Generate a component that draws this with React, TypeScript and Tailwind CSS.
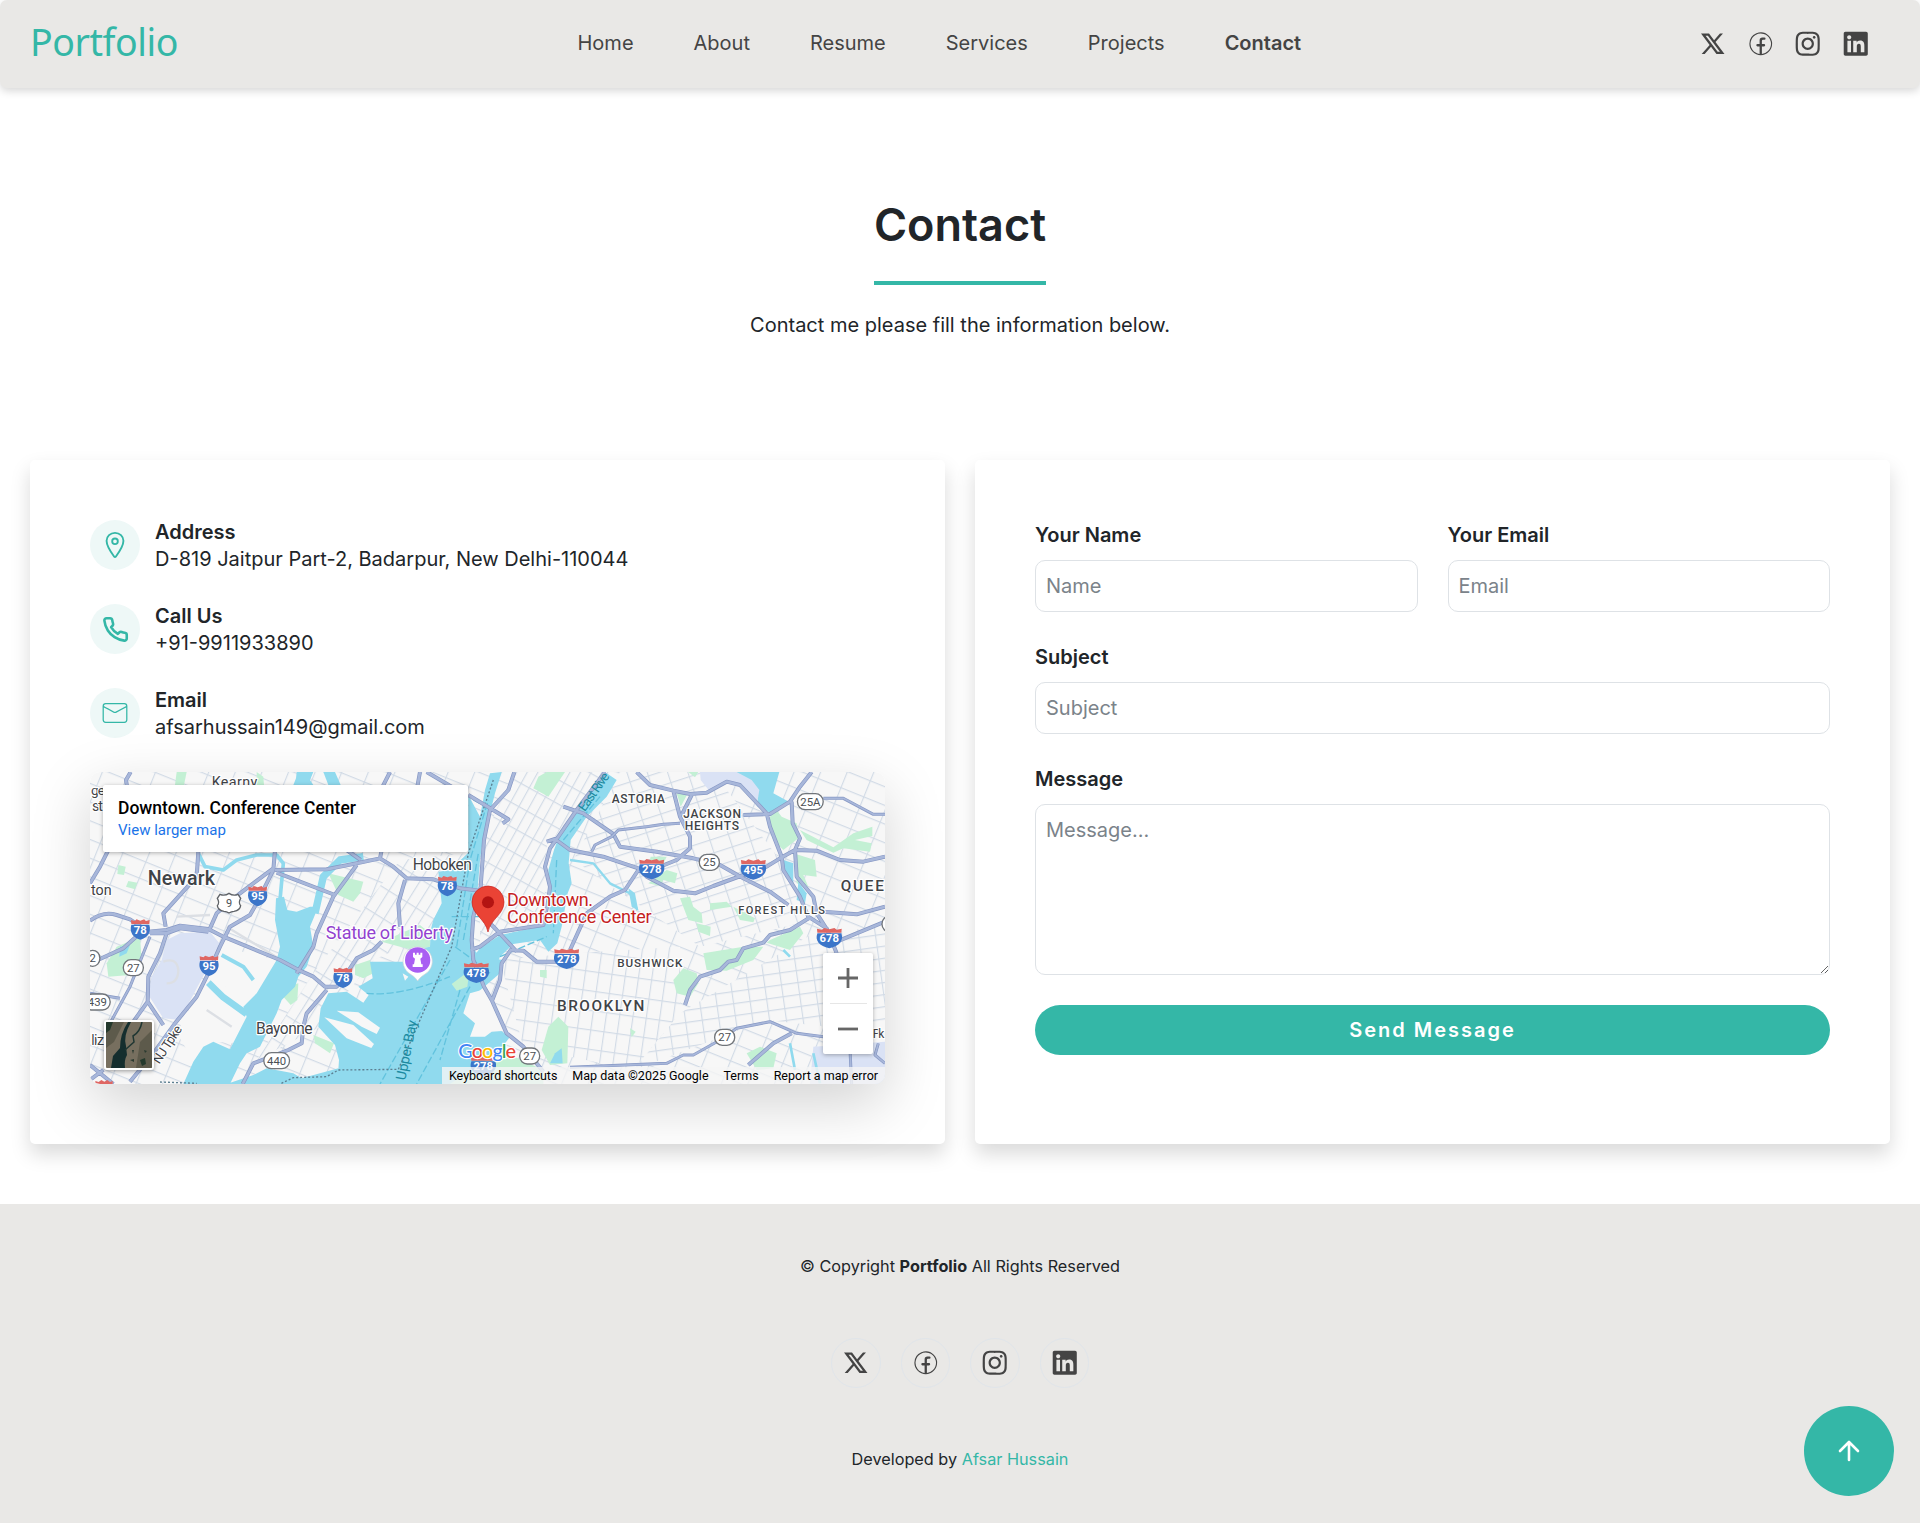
import type { ReactNode } from "react";
import { RiTwitterXLine } from "react-icons/ri";
import { CiFacebook, CiMail } from "react-icons/ci";
import { FaInstagram, FaLinkedin } from "react-icons/fa";
import { IoLocationOutline } from "react-icons/io5";
import { FiPhone } from "react-icons/fi";

const NAV = ["Home", "About", "Resume", "Services", "Projects", "Contact"];
const SOCIALS = [RiTwitterXLine, CiFacebook, FaInstagram, FaLinkedin];

/* ---------- map data ---------- */
const WEST_WATER = [
  "588,415 612,410 622,450 650,455 690,440 715,440 690,500 700,560 680,620 655,650 645,680 605,720 590,760 540,860 500,880 480,910 450,972 310,972 340,905 370,860 400,845 450,868 500,770 490,740 530,700 590,600 600,560 585,480",
  "440,972 520,945 560,925 640,940 665,955 775,925 800,972",
  "650,36 700,36 690,60 700,75 640,75 648,55",
  "730,36 765,36 782,75 745,75",
  "120,560 150,555 140,580 118,590",
  "1230,40 1215,90 1200,170 1165,105 1165,278 1110,330 1075,335 1085,430 1060,480 1052,510 1050,560 1000,570 970,605 870,605 878,655 835,680 866,705 850,728 800,695 745,700 722,745 715,800 765,855 777,900 775,930 790,972 1110,972 1260,870 1290,830 1245,800 1210,770 1190,700 1260,640 1270,600 1200,590 1175,560 1180,480 1192,400 1200,300 1210,230 1225,180 1245,100 1265,36",
];
const EAST_WATER = [
  "375,36 410,60 380,110 320,170 272,240 266,310 275,370 263,400 245,500 232,550 205,575 180,540 100,552 60,590 40,640 0,645 -20,590 0,565 60,525 180,500 212,480 205,420 205,330 222,270 235,235 290,160 330,100",
  "770,36 898,36 880,100 932,128 870,158 830,138 838,90 815,60",
  "910,300 940,310 940,370 915,350",
  "955,365 980,400 975,430 950,420",
  "225,880 245,865 248,910 210,910",
];
const LAND_ON_WATER = [
  "770,752 835,757 900,803 890,822 845,800",
  "733,772 820,795 882,852 874,864 800,835",
  "1150,760 1170,700 1205,690 1260,760 1275,812 1235,815 1215,830 1170,830 1185,790",
  "968,640 985,650 975,662",
  "430,650 470,660 500,700 490,715 440,690",
];
const WEST_PARKS = [
  "290,36 320,36 312,75 285,75",
  "530,36 550,50 552,75 530,75",
  "115,315 137,320 132,345 112,342",
  "145,363 172,368 165,388 138,380",
  "80,610 110,560 180,530 185,600 150,645 85,650",
  "745,340 850,365 840,400 820,425 775,405",
  "905,545 1020,495 1050,520 1050,560 1000,570 960,560",
  "825,615 870,600 880,640 850,655 825,645",
  "620,680 655,670 652,720 632,735 610,710",
  "700,825 762,850 750,880 705,850",
  "1120,670 1165,632 1160,680 1130,690",
];
const EAST_PARKS = [
  "175,50 200,36 255,36 205,110 160,85",
  "590,100 622,103 602,140",
  "512,290 560,290 545,320 510,300",
  "505,370 560,330 592,340 585,370 550,360 540,378",
  "600,415 630,410 640,440 665,460 668,490 625,480",
  "650,490 692,500 690,528 655,515",
  "760,440 825,475 820,487 780,480",
  "690,430 740,425 755,440 690,450",
  "870,170 890,150 905,170 950,190 955,235 910,270 880,240 865,200",
  "960,210 1060,262 1120,220 1177,200 1177,228 1125,240 1175,250 1170,275 1090,265 1060,278 980,240",
  "940,280 1005,300 1010,350 970,345 985,380 950,370",
  "870,540 960,500 970,520 930,570 860,548",
  "670,580 790,560 850,560 820,600 740,632 680,630",
  "580,660 610,625 650,640 655,670 630,710 590,700",
  "180,630 200,630 200,655 180,650",
  "205,800 235,770 265,800 262,910 210,915 185,870",
  "450,805 467,815 455,832",
  "800,880 840,860 890,880 880,925 830,930",
  "10,770 50,770 40,800 0,790",
  "-60,880 60,870 190,930 190,972 -90,972",
  "625,36 655,36 645,52",
];
const WEST_ROADS = [
  "M152,36 L138,60 L142,85",
  "M85,270 L60,320 L30,370",
  "M30,482 Q70,452 110,465 L150,478 L205,515 L260,510 L300,497 L385,507 L430,530 L600,600 L660,632 L700,650 L735,680 L770,680 L800,650",
  "M40,606 L130,565 L180,520",
  "M210,520 L260,520 L300,505 L385,515",
  "M260,520 L240,580 L205,650 L203,725 L160,785",
  "M203,725 L250,795",
  "M585,270 L580,330 L530,430 L510,465 L450,500 L420,560 L380,650 L350,710 L285,790 L220,880 L150,965",
  "M580,325 L480,400 L410,460 L390,505",
  "M585,330 L740,328 L830,310 L900,295 L940,320 L980,355 L1060,358 L1140,385 L1200,392",
  "M590,338 L765,405",
  "M830,315 L760,410 L710,520 L700,560 L650,640",
  "M975,360 L955,430 L960,500",
  "M905,545 L880,570 L830,595 L800,640",
  "M740,690 L680,760 L670,800 L665,850 L625,870 L520,910 L488,972",
  "M355,275 L350,350 L250,460 L257,500",
  "M930,36 L905,85 M1020,36 L1012,80 M1040,36 L1115,80 M905,270 L900,295 M800,270 L842,300",
  "M30,915 L100,972 M30,960 L70,930",
];
const EAST_ROADS = [
  "M103,36 L85,90 L30,150 L12,240 L2,380 L-20,470 L-25,540 L-20,600 L12,680 L35,720 L80,820 L130,860 L190,935",
  "M375,36 L290,150 L235,230 L210,265 L195,320 L210,380 L205,420 L190,495 L60,515 L0,560 L-28,570",
  "M-35,105 L85,178 L68,190",
  "M250,140 L310,160 L400,222 L420,260 L530,275 L640,295 L720,315 L790,355 L870,395 L925,435",
  "M200,245 L225,237 L270,270 L370,290 L430,310 L475,325 L500,350 L580,392 L645,400 L700,378 L790,345 L860,320 L900,295 L945,270 L1010,272 L1080,300 L1150,305 L1215,290",
  "M475,330 L435,390 L390,410 L320,460 L270,570",
  "M270,605 L170,605 L130,572 L92,570 L65,610 L60,660 L35,725",
  "M110,575 L50,510 L20,480",
  "M470,36 L510,75 L580,92 L630,102 L680,98 L740,65 L780,75 L860,160 L870,200 L905,290 L910,330 L960,410 L985,470 L1040,505 L1070,580",
  "M580,92 L600,170 L630,230 L630,265 L590,300 L540,320",
  "M635,105 L605,165",
  "M790,165 L870,162 L930,125 L960,80 L995,36",
  "M935,125 L938,190 L960,235 L945,270 L950,350 L1000,410 L1010,460 L1045,515",
  "M1030,455 L1130,463 L1215,440",
  "M1070,545 L1215,485",
  "M990,472 L930,510 L870,525 L850,548 L790,565 L770,600 L745,605 L720,630 L660,650 L630,690 L615,735",
  "M805,915 L880,850 L935,820",
];
const THIN_ROADS_EAST = [
  "M335,275 L345,255 L395,230 L415,210 L500,200 L550,193 L600,190",
  "M1030,115 L1090,115 L1180,163 L1215,163",
  "M270,922 L560,910 L610,885 L640,885 L720,840 L770,805 L870,785 L950,820 L1030,830",
  "M1110,870 L1115,972 M1195,850 L1185,885 L1215,910",
];

const Polys = ({ pts, fill }: { pts: string[]; fill: string }) => (
  <g fill={fill}>{pts.map((p) => <polygon key={p} points={p} />)}</g>
);

const Roads = ({ d, w }: { d: string[]; w: number }) => (
  <g fill="none" strokeLinejoin="round">
    <path d={d.join(" ")} stroke="#8798c4" strokeWidth={w} />
    <path d={d.join(" ")} stroke="#a8b7da" strokeWidth={w - 4} />
  </g>
);

const Interstate = ({ x, y, n }: { x: number; y: number; n: string }) => {
  const k = n.length > 2 ? 1.38 : 1.04;
  return (
    <g transform={`translate(${x} ${y})`}>
      <g transform={`scale(${k} 1)`}>
        <path d="M-26,-14 C-32,8 -22,24 0,31 C22,24 32,8 26,-14 Z" fill="#3b75c9" />
        <path d="M-26,-16 L-27,-28 L-16,-25 L-11,-30 L0,-26 L11,-30 L16,-25 L27,-28 L26,-16 Z" fill="#df6763" />
      </g>
      <text y="13" textAnchor="middle" fill="#fff" fontSize="34" fontWeight="700">{n}</text>
    </g>
  );
};

const Oval = ({ x, y, n }: { x: number; y: number; n: string }) => {
  const w = 26 + n.length * 17;
  return (
    <g transform={`translate(${x} ${y})`}>
      <rect x={-w / 2} y="-24" width={w} height="48" rx="23" fill="#fff" stroke="#71757a" strokeWidth="4" />
      <text y="12" textAnchor="middle" fill="#4b4f54" fontSize="34">{n}</text>
    </g>
  );
};

type LabelProps = { x: number; y: number; w: number; size: number; weight?: number; fill?: string; rotate?: number; halo?: boolean; children: ReactNode };
const Label = ({ x, y, w, size, weight = 400, fill = "#3f4347", rotate = 0, halo = true, children }: LabelProps) => (
  <text
    transform={`translate(${x} ${y}) rotate(${rotate})`}
    textLength={w}
    fontSize={size}
    fontWeight={weight}
    fill={fill}
    stroke={halo ? "#fff" : "none"}
    strokeWidth={halo ? 7 : 0}
    strokeLinejoin="round"
    paintOrder="stroke"
  >
    {children}
  </text>
);

const Grid = ({ id, w, h, r }: { id: string; w: number; h: number; r: number }) => (
  <pattern id={id} width={w} height={h} patternUnits="userSpaceOnUse" patternTransform={`rotate(${r})`}>
    <path d={`M0,0 H${w} M0,0 V${h}`} fill="none" stroke="#d2dbe6" strokeWidth="7" />
  </pattern>
);

function MapDrawing() {
  return (
    <svg viewBox="30 36 2385 936" preserveAspectRatio="none" className="block h-full w-full font-['Roboto']">
      <defs>
        <Grid id="gridBase" w={74} h={52} r={22} />
        <Grid id="gridManhattan" w={28} h={64} r={29} />
        <Grid id="gridJersey" w={32} h={80} r={32} />
        <Grid id="gridQueens" w={58} h={40} r={-18} />
        <Grid id="gridBrooklyn" w={40} h={58} r={8} />
        <Grid id="gridSouth" w={50} h={36} r={-8} />
      </defs>
      <rect x="30" y="36" width="2385" height="936" fill="#f7f7f7" />
      <rect x="30" y="36" width="2385" height="936" fill="url(#gridBase)" />
      <polygon points="530,900 700,640 960,300 1160,280 1100,500 880,600 720,800" fill="#f7f7f7" />
      <polygon points="530,900 700,640 960,300 1160,280 1100,500 880,600 720,800" fill="url(#gridJersey)" />
      <g transform="translate(1200)">
        <polygon points="100,36 375,36 200,260 190,500 0,560 0,260" fill="#f7f7f7" />
        <polygon points="100,36 375,36 200,260 190,500 0,560 0,260" fill="url(#gridManhattan)" />
        <polygon points="420,36 700,36 900,300 1000,480 660,560 280,300" fill="#f7f7f7" />
        <polygon points="420,36 700,36 900,300 1000,480 660,560 280,300" fill="url(#gridQueens)" />
        <polygon points="60,600 280,580 600,560 600,760 460,930 130,860" fill="#f7f7f7" />
        <polygon points="60,600 280,580 600,560 600,760 460,930 130,860" fill="url(#gridBrooklyn)" />
        <polygon points="600,760 1000,520 1215,500 1215,820 860,780 460,930" fill="#f7f7f7" />
        <polygon points="600,760 1000,520 1215,500 1215,820 860,780 460,930" fill="url(#gridSouth)" />
      </g>

      <polygon points="425,560 590,600 560,700 500,765 480,850 400,845 340,900 290,820" fill="#f7f7f7" />
      <polygon points="260,540 300,520 390,515 418,550 390,610 300,780 250,775 205,705 215,650 245,600" fill="#dae2f5" />
      <path d="M250,605 q40,-15 45,25 q0,40 -35,40 M290,470 L390,465 M380,750 L455,800 M440,500 L620,610" fill="none" stroke="#dcdfe4" strokeWidth="7" />
      <Polys pts={WEST_PARKS} fill="#c3f0d4" />
      <g transform="translate(1200)">
        <polygon points="660,36 815,36 842,90 830,125 770,70 740,60 690,95 662,60" fill="#dae2f5" />
        <polygon points="1000,860 1215,845 1215,972 990,972" fill="#dae2f5" />
        <Polys pts={EAST_PARKS} fill="#c3f0d4" />
      </g>

      <g fill="none" stroke="#90daee" strokeLinejoin="round">
        <path d="M355,280 L375,320 L430,330 L470,300 L530,285 L590,285 L610,310 L600,420" strokeWidth="11" />
        <path d="M705,460 L730,350 L780,300 L850,290" strokeWidth="22" />
        <path d="M385,668 L430,712 L500,762" strokeWidth="20" />
        <path d="M425,585 L490,620 L520,660" strokeWidth="12" />
        <path d="M1470,300 L1540,310 L1590,370 L1650,400 L1672,450" strokeWidth="7" />
        <path d="M2110,570 L2130,590 M2130,850 L2145,930 M2200,880 L2220,970" strokeWidth="8" />
      </g>
      <path d="M1645,385 L1665,400 L1675,452 L1655,440 Z" fill="#90daee" />
      <Polys pts={WEST_WATER} fill="#90daee" />
      <g transform="translate(1200)"><Polys pts={EAST_WATER} fill="#90daee" /></g>
      <Polys pts={LAND_ON_WATER} fill="#f7f7f7" />
      <polygon points="1115,672 1168,632 1162,680 1130,692" fill="#c3f0d4" />
      <g fill="none" stroke="#62c3de" strokeWidth="4" strokeDasharray="22 8">
        <path d="M860,700 Q960,710 1110,650 M1110,600 L900,972 M1170,680 L1010,972 M1125,560 L1180,600 L1230,640 M1130,560 L1170,300 L1225,120 M1150,540 L1195,280 M1140,690 L1080,900 M1115,470 L1200,470 M1180,120 L1240,150" />
        <path d="M1430,300 L1420,520 M1260,590 L1400,530 M1450,240 L1560,110" />
      </g>
      <path d="M1240,60 L1165,280 L1140,420 L1115,560 L1020,780 L955,928 L775,930 L740,950 L640,953 L600,972 M240,966 L350,970" fill="none" stroke="#5c7f91" strokeWidth="4" strokeDasharray="6 6" />

      <Roads d={WEST_ROADS} w={12} />
      <Roads d={["M210,530 L150,680 L90,790", "M30,700 L120,715"]} w={9} />
      <g transform="translate(1200)">
        <Roads d={EAST_ROADS} w={12} />
        <Roads d={THIN_ROADS_EAST} w={9} />
      </g>

      <Label x={395} y={82} w={137} size={43}>Kearny</Label>
      <Label x={33} y={105} w={42} size={41}>ge</Label>
      <Label x={36} y={154} w={33} size={43}>st</Label>
      <Label x={33} y={404} w={62} size={43}>ton</Label>
      <Label x={203} y={374} w={202} size={59} weight={500}>Newark</Label>
      <Label x={998} y={330} w={178} size={47}>Hoboken</Label>
      <Label x={737} y={536} w={382} size={54} fill="#9242cf">Statue of Liberty</Label>
      <Label x={528} y={823} w={170} size={47}>Bayonne</Label>
      <Label x={34} y={856} w={38} size={43}>liz</Label>
      <Label x={238} y={914} w={128} size={39} rotate={-57}>NJ Tpke</Label>
      <Label x={976} y={962} w={182} size={42} fill="#1c8aa0" rotate={-79} halo={false}>Upper Bay</Label>
      <Label x={1514} y={157} w={132} size={39} fill="#1c8aa0" rotate={-55} halo={false}>East Rive</Label>
      <Label x={1595} y={130} w={160} size={36} weight={500}>ASTORIA</Label>
      <Label x={1810} y={175} w={173} size={36} weight={500}>JACKSON</Label>
      <Label x={1814} y={210} w={163} size={36} weight={500}>HEIGHTS</Label>
      <Label x={2282} y={394} w={130} size={46} weight={500}>QUEE</Label>
      <Label x={1975} y={461} w={260} size={33} weight={500}>FOREST HILLS</Label>
      <Label x={1612} y={621} w={195} size={35} weight={500}>BUSHWICK</Label>
      <Label x={1431} y={752} w={262} size={46} weight={500}>BROOKLYN</Label>
      <Label x={2378} y={834} w={35} size={36}>Pk</Label>

      <Interstate x={533} y={408} n="95" />
      <Interstate x={387} y={617} n="95" />
      <Interstate x={181} y={508} n="78" />
      <Interstate x={789} y={653} n="78" />
      <Interstate x={1102} y={378} n="78" />
      <Interstate x={1189} y={638} n="478" />
      <Interstate x={1210} y={918} n="278" />
      <Interstate x={1460} y={596} n="278" />
      <Interstate x={1715} y={327} n="278" />
      <Interstate x={2020} y={328} n="495" />
      <Interstate x={2248} y={534} n="678" />
      <path d="M46,972 V963 L56,966 L64,960 L73,965 L82,960 L90,966 L98,963 V972 Z" fill="#df6763" />
      <Oval x={160} y={623} n="27" />
      <Oval x={52} y={726} n="439" />
      <Oval x={38} y={595} n="2" />
      <path d="M420,403 q14,6 27,-3 q13,9 27,3 l8,12 q-8,13 0,22 q-2,14 -20,17 q-8,0 -15,5 q-7,-5 -15,-5 q-18,-3 -20,-17 q8,-9 0,-22 Z" fill="#fff" stroke="#5f6368" strokeWidth="4" />
      <text x="447" y="441" textAnchor="middle" fill="#4b4f54" fontSize="33">9</text>
      <Oval x={590} y={902} n="440" />
      <Oval x={1349} y={888} n="27" />
      <Oval x={1934} y={832} n="27" />
      <Oval x={1888} y={307} n="25" />
      <Oval x={2191} y={125} n="25A" />
      <rect x="2406" y="468" width="48" height="48" rx="23" fill="#fff" stroke="#71757a" strokeWidth="4" />

      <path d="M1013,663 C1005,650 996,646 985,638 A44,44 0 1 1 1041,638 C1030,646 1021,650 1013,663 Z" fill="#fff" stroke="#cfd3d8" strokeWidth="2" />
      <circle cx="1013" cy="600" r="38" fill="#a95ff2" />
      <path d="M999,578 v13 l6,5 -3,17 h-4 v8 h30 v-8 h-4 l-3,-17 6,-5 v-13 h-6 v6 h-5 v-6 h-6 v6 h-5 v-6 Z" fill="#fff" />

      <path d="M1224,516 C1216,476 1176,464 1176,426 A48,48 0 0 1 1272,426 C1272,464 1232,476 1224,516 Z" fill="#ea4335" stroke="#c5221f" strokeWidth="2" />
      <circle cx="1224" cy="427" r="18" fill="#b31412" />
      <Label x={1281} y={438} w={258} size={54} fill="#c5221f">Downtown.</Label>
      <Label x={1281} y={488} w={434} size={54} fill="#c5221f">Conference Center</Label>

      <text x="1135" y="893" textLength="173" fontSize="60" fontWeight="500" stroke="#fff" strokeWidth="7" paintOrder="stroke" className="font-['Lato']">
        <tspan fill="#4285f4">G</tspan>
        <tspan fill="#ea4335">o</tspan>
        <tspan fill="#fbbc04">o</tspan>
        <tspan fill="#4285f4">g</tspan>
        <tspan fill="#34a853">l</tspan>
        <tspan fill="#ea4335">e</tspan>
      </text>
    </svg>
  );
}

function MapEmbed() {
  return (
    <div className="relative h-[312px] overflow-hidden rounded-[10px] font-['Roboto'] shadow-[0_20px_60px_rgba(0,0,0,0.175)]">
      <MapDrawing />
      <div className="absolute top-[13px] left-[13px] h-[67px] w-[365px] rounded-[2px] bg-white px-[15px] pt-[13px] shadow-[0_1px_4px_rgba(0,0,0,0.3)]">
        <div className="text-[17.5px] leading-[21px] font-medium text-black">Downtown. Conference Center</div>
        <div className="text-[15px] leading-[22px] text-[#1a73e8]">View larger map</div>
      </div>
      <div className="absolute top-[248px] left-[14px] size-[50px] overflow-hidden rounded-[3px] border-2 border-white bg-[#776f5f] shadow-[0_1px_4px_rgba(0,0,0,0.4)]">
        <svg viewBox="0 0 46 46" className="size-full">
          <path d="M0,0 H18 L8,20 L0,26 Z M34,20 L46,8 V46 H30 Z" fill="#5d5a4b" />
          <path d="M22,0 L25,0 Q17,14 20,24 L21,33 Q18,38 19,46 H5 L7,34 L14,26 Q14,12 22,0 Z" fill="#152e2e" />
          <path d="M36,0 Q34,10 27,14 L28,20 L19,28" fill="none" stroke="#1f3632" strokeWidth="1.5" />
          <path d="M0,0 h7 l-3,8 l-4,3 Z M34,38 l5,-2 1,6 -4,2 Z" fill="#24392c" />
          <path d="M24,38 l4,-1 0,3 Z M38,28 l3,1 -2,2 Z M26,28 l2,0 -1,4 Z" fill="#2b3a30" />
        </svg>
      </div>
      <div className="absolute top-[181px] left-[733px] flex h-[101px] w-[50px] flex-col items-center rounded-[2px] bg-white shadow-[0_1px_4px_rgba(0,0,0,0.3)]">
        <svg viewBox="0 0 50 50" className="size-[50px]"><path d="M15,25 H35 M25,15 V35" stroke="#666" strokeWidth="2.8" /></svg>
        <div className="h-px w-[37px] bg-[#e6e6e6]" />
        <svg viewBox="0 0 50 50" className="size-[50px]"><path d="M15,25 H35" stroke="#666" strokeWidth="2.8" /></svg>
      </div>
      <div className="absolute right-0 bottom-0 flex h-[17px] items-center gap-[15px] bg-[#f5f5f5]/80 pr-[7px] pl-[7px] text-[12.5px] leading-[17px] whitespace-nowrap text-black">
        <span>Keyboard shortcuts</span>
        <span>Map data ©2025 Google</span>
        <span>Terms</span>
        <span>Report a map error</span>
      </div>
    </div>
  );
}

const InfoRow = ({ icon, title, text }: { icon: ReactNode; title: string; text: string }) => (
  <div className="flex h-[54px] items-start gap-[15px]">
    <span className="flex size-[50px] items-center justify-center rounded-full bg-[#eef8f7] text-[#34b7a7]">{icon}</span>
    <div>
      <h3 className="text-[20px] leading-[24px] font-semibold">{title}</h3>
      <p className="leading-[30px]">{text}</p>
    </div>
  </div>
);

const inputClass =
  "block w-full rounded-[10px] border border-[#dee2e6] bg-white px-[10px] text-[20px] leading-[30px] placeholder:text-[#7b838a]";

const Field = ({ label, children }: { label: string; children: ReactNode }) => (
  <label className="flex flex-col gap-[10px]">
    <span className="leading-[30px] font-semibold">{label}</span>
    {children}
  </label>
);

export default function App() {
  return (
    <div className="flex min-h-[1523px] flex-col bg-white font-['Inter',sans-serif] text-[20px] leading-[30px] text-[#212529]">
      <header className="flex h-[88px] items-center rounded-[7px] bg-[#e9e8e6] pr-[50px] pb-[2px] pl-[30px] text-[#444] shadow-[0_3px_8px_rgba(0,0,0,0.16)]">
        <a className="w-[547.5px] pb-[3px] font-['Noto_Sans'] text-[37.5px] tracking-[-0.45px] text-[#34b7a7]">Portfolio</a>
        <nav className="flex flex-1 gap-[60px]">
          {NAV.map((item) => (
            <a key={item} className={item === "Contact" ? "font-semibold" : ""}>{item}</a>
          ))}
        </nav>
        <div className="flex gap-[20px] pt-[2px] pr-[0.6px]">
          {SOCIALS.map((Icon, i) => <Icon key={i} size={27.5} />)}
        </div>
      </header>

      <section className="flex h-[372px] flex-col items-center pt-[108px]">
        <h1 className="h-[89px] border-b-4 border-[#34b7a7] text-[45px] leading-[58px] font-semibold">Contact</h1>
        <p className="mt-[25px]">Contact me please fill the information below.</p>
      </section>

      <main className="grid grid-cols-2 gap-[30px] px-[30px]">
        <section className="flex h-[684px] flex-col gap-[30px] rounded-[5px] bg-white p-[60px] shadow-[0_10px_20px_rgba(0,0,0,0.15)]">
          <InfoRow icon={<IoLocationOutline size={30} />} title="Address" text="D-819 Jaitpur Part-2, Badarpur, New Delhi-110044" />
          <InfoRow icon={<FiPhone size={27} strokeWidth={2.3} />} title="Call Us" text="+91-9911933890" />
          <InfoRow icon={<CiMail size={30} />} title="Email" text="afsarhussain149@gmail.com" />
          <MapEmbed />
        </section>

        <form className="flex h-[684px] flex-col gap-[30px] rounded-[5px] bg-white p-[60px] shadow-[0_10px_20px_rgba(0,0,0,0.15)]">
          <div className="grid grid-cols-2 gap-[30px]">
            <Field label="Your Name"><input className={`${inputClass} h-[52px]`} placeholder="Name" /></Field>
            <Field label="Your Email"><input className={`${inputClass} h-[52px]`} placeholder="Email" /></Field>
          </div>
          <Field label="Subject"><input className={`${inputClass} h-[52px]`} placeholder="Subject" /></Field>
          <Field label="Message"><textarea className={`${inputClass} h-[171px] resize py-[10px]`} placeholder="Message..." /></Field>
          <button type="button" className="h-[50px] rounded-full bg-[#34b7a7] font-semibold tracking-[2px] text-white">Send Message</button>
        </form>
      </main>

      <footer className="relative mt-[60px] flex flex-1 flex-col items-center bg-[#e9e8e6] pt-[47px] text-[16.25px]">
        <p>© Copyright <strong className="font-bold">Portfolio</strong> All Rights Reserved</p>
        <div className="mt-[57px] flex gap-[20px] text-[#444]">
          {SOCIALS.map((Icon, i) => (
            <a key={i} className="flex size-[49.5px] items-center justify-center rounded-full border border-[#e0e5ea]"><Icon size={27.5} /></a>
          ))}
        </div>
        <p className="mt-[56px]">Developed by <a className="text-[#34b7a7]">Afsar Hussain</a></p>
        <button type="button" className="absolute top-[202px] right-[26px] flex size-[90px] items-center justify-center rounded-full bg-[#34b7a7]">
          <svg viewBox="0 0 30 30" className="size-[30px]" fill="none" stroke="#fff" strokeWidth="2.6" strokeLinecap="round" strokeLinejoin="round">
            <path d="M15,24 V6 M6,15 L15,6 L24,15" />
          </svg>
        </button>
      </footer>
    </div>
  );
}
